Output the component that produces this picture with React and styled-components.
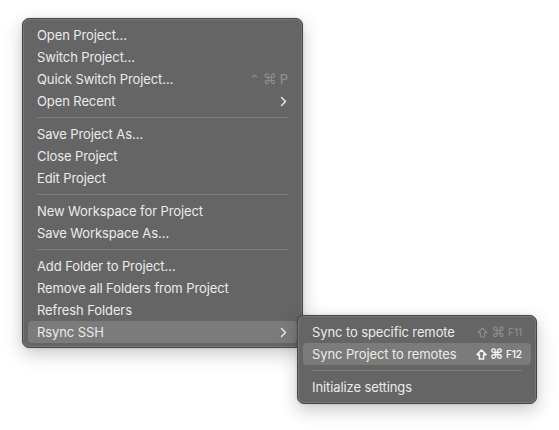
import React from "react";
import styled, { createGlobalStyle } from "styled-components";

const GlobalStyle = createGlobalStyle`
  html, body {
    margin: 0;
    padding: 0;
    background: #ffffff;
  }
  body {
    font-family: "Inter", "Liberation Sans", "DejaVu Sans", sans-serif;
    -webkit-font-smoothing: antialiased;
  }
`;

const Page = styled.div`
  width: 559px;
  height: 430px;
  padding: 18px 0 0 22px;
  box-sizing: border-box;
`;

const MenuWrap = styled.div`
  position: relative;
  width: 281px;
`;

const Menu = styled.div`
  display: flex;
  flex-direction: column;
  width: ${(props) => props.width}px;
  box-sizing: border-box;
  padding: 5px 5px ${(props) => props.padBottom}px 5px;
  background: #656565;
  border: 1px solid #474747;
  border-radius: 7px;
  box-shadow: inset 0 0 0 1px rgba(255, 255, 255, 0.12),
    0 6px 18px rgba(0, 0, 0, 0.22), 0 0 3px rgba(0, 0, 0, 0.12);
`;

const SubMenu = styled(Menu)`
  position: absolute;
  top: 297px;
  left: 275px;
`;

const Row = styled.div`
  display: flex;
  align-items: center;
  height: 22px;
  padding: 0 9px 0 9px;
  border-radius: 4px;
  background: ${(props) => (props.active ? "#7b7b7b" : "transparent")};
  color: #ebebeb;
  font-size: 13px;
  letter-spacing: -0.1px;
`;

const Label = styled.span`
  flex: 1;
  white-space: nowrap;
`;

const Shortcut = styled.span`
  display: flex;
  align-items: center;
  gap: 3px;
  color: ${(props) => (props.bright ? "#f4f4f4" : "#8e8e8e")};
  font-weight: ${(props) => (props.bright ? 700 : 400)};
`;

const Glyph = styled.span`
  font-family: "DejaVu Sans", sans-serif;
  font-size: ${(props) => props.size || 13}px;
  line-height: 1;
`;

const Key = styled.span`
  font-family: "Inter", "Liberation Sans", sans-serif;
  font-size: ${(props) => props.size || 12}px;
  font-weight: ${(props) => (props.bold ? 600 : 500)};
  line-height: 1;
`;

const Separator = styled.div`
  height: 1px;
  margin: 5px 9px;
  background: #7d7d7d;
`;

function Chevron() {
  return (
    <svg width="7" height="11" viewBox="0 0 7 11" style={{ marginRight: 1 }}>
      <polyline
        points="1.5,1.5 5.5,5.5 1.5,9.5"
        fill="none"
        stroke="#e6e6e6"
        strokeWidth="1.5"
        strokeLinecap="round"
        strokeLinejoin="round"
      />
    </svg>
  );
}

function ShiftIcon({ color, weight }) {
  return (
    <svg width="11" height="11" viewBox="0 0 11 11">
      <path
        d="M5.5 1 L10 5.6 H7.6 V10 H3.4 V5.6 H1 Z"
        fill="none"
        stroke={color}
        strokeWidth={weight}
        strokeLinejoin="round"
      />
    </svg>
  );
}

function Item({ label, active, children }) {
  return (
    <Row active={active}>
      <Label>{label}</Label>
      {children}
    </Row>
  );
}

export default function App() {
  return (
    <>
      <GlobalStyle />
      <Page>
        <MenuWrap>
          <Menu width={281} padBottom={4}>
            <Item label="Open Project…" />
            <Item label="Switch Project…" />
            <Item label="Quick Switch Project…">
              <Shortcut>
                <Glyph size={13}>⌃</Glyph>
                <Glyph size={14}>⌘</Glyph>
                <Key size={13}>P</Key>
              </Shortcut>
            </Item>
            <Item label="Open Recent">
              <Chevron />
            </Item>
            <Separator />
            <Item label="Save Project As…" />
            <Item label="Close Project" />
            <Item label="Edit Project" />
            <Separator />
            <Item label="New Workspace for Project" />
            <Item label="Save Workspace As…" />
            <Separator />
            <Item label="Add Folder to Project…" />
            <Item label="Remove all Folders from Project" />
            <Item label="Refresh Folders" />
            <Item label="Rsync SSH" active>
              <Chevron />
            </Item>
          </Menu>
          <SubMenu width={240} padBottom={5}>
            <Item label="Sync to specific remote">
              <Shortcut>
                <ShiftIcon color="#8e8e8e" weight={1.2} />
                <Glyph size={14}>⌘</Glyph>
                <Key size={10}>F11</Key>
              </Shortcut>
            </Item>
            <Item label="Sync Project to remotes" active>
              <Shortcut bright>
                <ShiftIcon color="#f4f4f4" weight={1.6} />
                <Glyph size={14}>⌘</Glyph>
                <Key size={10} bold>
                  F12
                </Key>
              </Shortcut>
            </Item>
            <Separator />
            <Item label="Initialize settings" />
          </SubMenu>
        </MenuWrap>
      </Page>
    </>
  );
}
